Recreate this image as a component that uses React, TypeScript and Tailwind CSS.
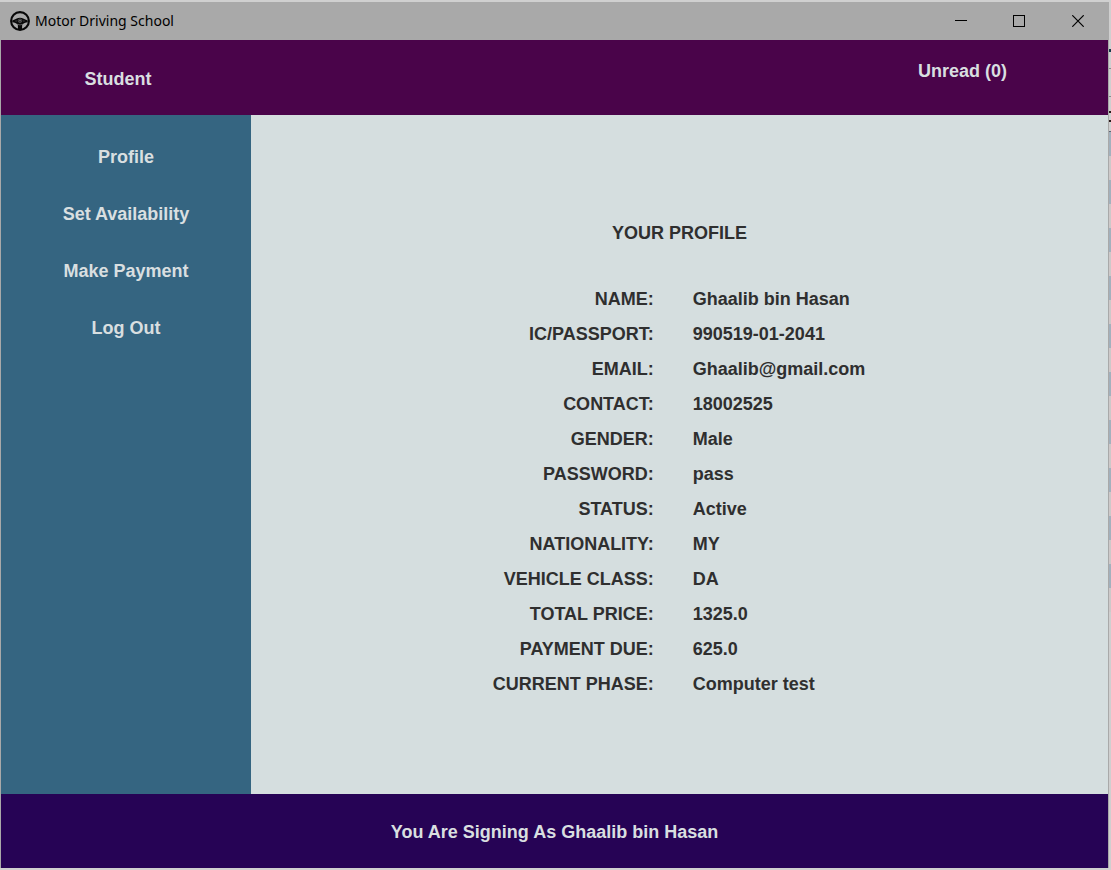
const details = [
  ["NAME:", "Ghaalib bin Hasan"],
  ["IC/PASSPORT:", "990519-01-2041"],
  ["EMAIL:", "Ghaalib@gmail.com"],
  ["CONTACT:", "18002525"],
  ["GENDER:", "Male"],
  ["PASSWORD:", "pass"],
  ["STATUS:", "Active"],
  ["NATIONALITY:", "MY"],
  ["VEHICLE CLASS:", "DA"],
  ["TOTAL PRICE:", "1325.0"],
  ["PAYMENT DUE:", "625.0"],
  ["CURRENT PHASE:", "Computer test"],
];

const menu = ["Profile", "Set Availability", "Make Payment", "Log Out"];

function SteeringWheel() {
  return (
    <svg viewBox="0 0 20 20" className="size-5 shrink-0" aria-hidden="true">
      <circle cx="10" cy="10" r="8.9" fill="none" stroke="#080808" strokeWidth="2.1" />
      <path
        d="M2.2 9.6 C4 8.6 5.5 8.4 6.8 7.6 C8.5 6.6 11.5 6.6 13.2 7.6 C14.5 8.4 16 8.6 17.8 9.6 L17.6 11.2 C15.5 11.4 13.6 12.2 12.2 13.4 L12 18 H8 L7.8 13.4 C6.4 12.2 4.5 11.4 2.4 11.2 Z"
        fill="#080808"
      />
      <circle cx="10" cy="9.8" r="1.8" fill="none" stroke="#777" strokeWidth="0.6" />
      <path d="M9 9.2l2 1.2M11 9.2l-2 1.2M7.8 13.2l1.2.6h2l1.2-.6M5.5 10h1.2M13.3 10h1.2" fill="none" stroke="#888" strokeWidth="0.6" />
    </svg>
  );
}

function WindowControls() {
  const button = "flex h-[38px] items-center justify-center";
  return (
    <div className="flex">
      <button className={`${button} w-[58px]`} aria-label="Minimize">
        <svg width="12" height="12" viewBox="0 0 12 12" shapeRendering="crispEdges"><path d="M0 5.5h12" stroke="#000" /></svg>
      </button>
      <button className={`${button} w-[58px]`} aria-label="Maximize">
        <svg width="12" height="12" viewBox="0 0 12 12" shapeRendering="crispEdges"><path d="M.5.5h11v11H.5z" fill="none" stroke="#000" /></svg>
      </button>
      <button className={`${button} w-[60px]`} aria-label="Close">
        <svg width="12" height="12" viewBox="0 0 12 12"><path d="M.3.3l11.4 11.4M11.7.3L.3 11.7" stroke="#000" strokeWidth="1.2" /></svg>
      </button>
    </div>
  );
}

export default function App() {
  return (
    <div className="flex min-h-screen bg-[#d0d0d0] pt-[2px] pb-[2px] font-['Liberation_Sans',Arial,sans-serif] text-lg leading-5 font-bold text-[#2f2f2f]">
      <div className="flex grow flex-col border-x border-[#a9a9a9]">
        <header className="flex h-[38px] items-center justify-between bg-[#a9a9a9] pl-[9px]">
          <div className="flex items-center gap-[5px]">
            <SteeringWheel />
            <h1 className="font-['Noto_Sans','Open_Sans',sans-serif] text-sm leading-5 font-normal text-black">Motor Driving School</h1>
          </div>
          <WindowControls />
        </header>

        <div className="flex h-[75px] justify-between bg-[#4a044a] text-[#d9dfe0]">
          <p className="w-[234px] pt-[29px] text-center">Student</p>
          <button className="mt-[21px] mr-[101px] h-5">Unread (0)</button>
        </div>

        <div className="flex grow">
          <nav className="flex w-[250px] shrink-0 flex-col items-center gap-[37px] bg-[#356581] pt-8 text-[#d9dfe0]">
            {menu.map((item) => (
              <button key={item} className="h-5">{item}</button>
            ))}
          </nav>
          <main className="flex grow flex-col items-center bg-[#d5dedf] pt-[108px]">
            <h2>YOUR PROFILE</h2>
            <table className="mt-[38px] w-full">
              <tbody>
                {details.map(([label, value]) => (
                  <tr key={label} className="h-[35px]">
                    <th scope="row" className="w-[47%] p-0 text-right">{label}</th>
                    <td className="p-0 pl-[39px] text-left">{value}</td>
                  </tr>
                ))}
              </tbody>
            </table>
          </main>
        </div>

        <footer className="flex h-[74px] items-center justify-center bg-[#260355] pt-[2px] text-[#d9dfe0]">
          <p>You Are Signing As Ghaalib bin Hasan</p>
        </footer>
      </div>
      <div className="flex w-[2px] shrink-0 flex-col bg-[#cfcfcf]" aria-hidden="true">
        <div className="mt-[47px] h-[3px] bg-[#16394a]" />
        <div className="mt-[16px] h-px bg-[#8a8a8a]" />
        <div className="mt-[27px] h-px bg-[#8a8a8a]" />
        <div className="mt-[14px] h-[2px] bg-[#2a1a1a]" />
        <div className="mt-[7px] h-[2px] bg-[#2a1a1a]" />
        <div className="mt-[9px] h-px bg-[#5c6470]" />
        {Array.from({ length: 10 }, (_, i) => (
          <div key={i} className="h-12 border-t-[24px] border-[#a3b1bd] bg-[#cdc9c9]" />
        ))}
      </div>
    </div>
  );
}
